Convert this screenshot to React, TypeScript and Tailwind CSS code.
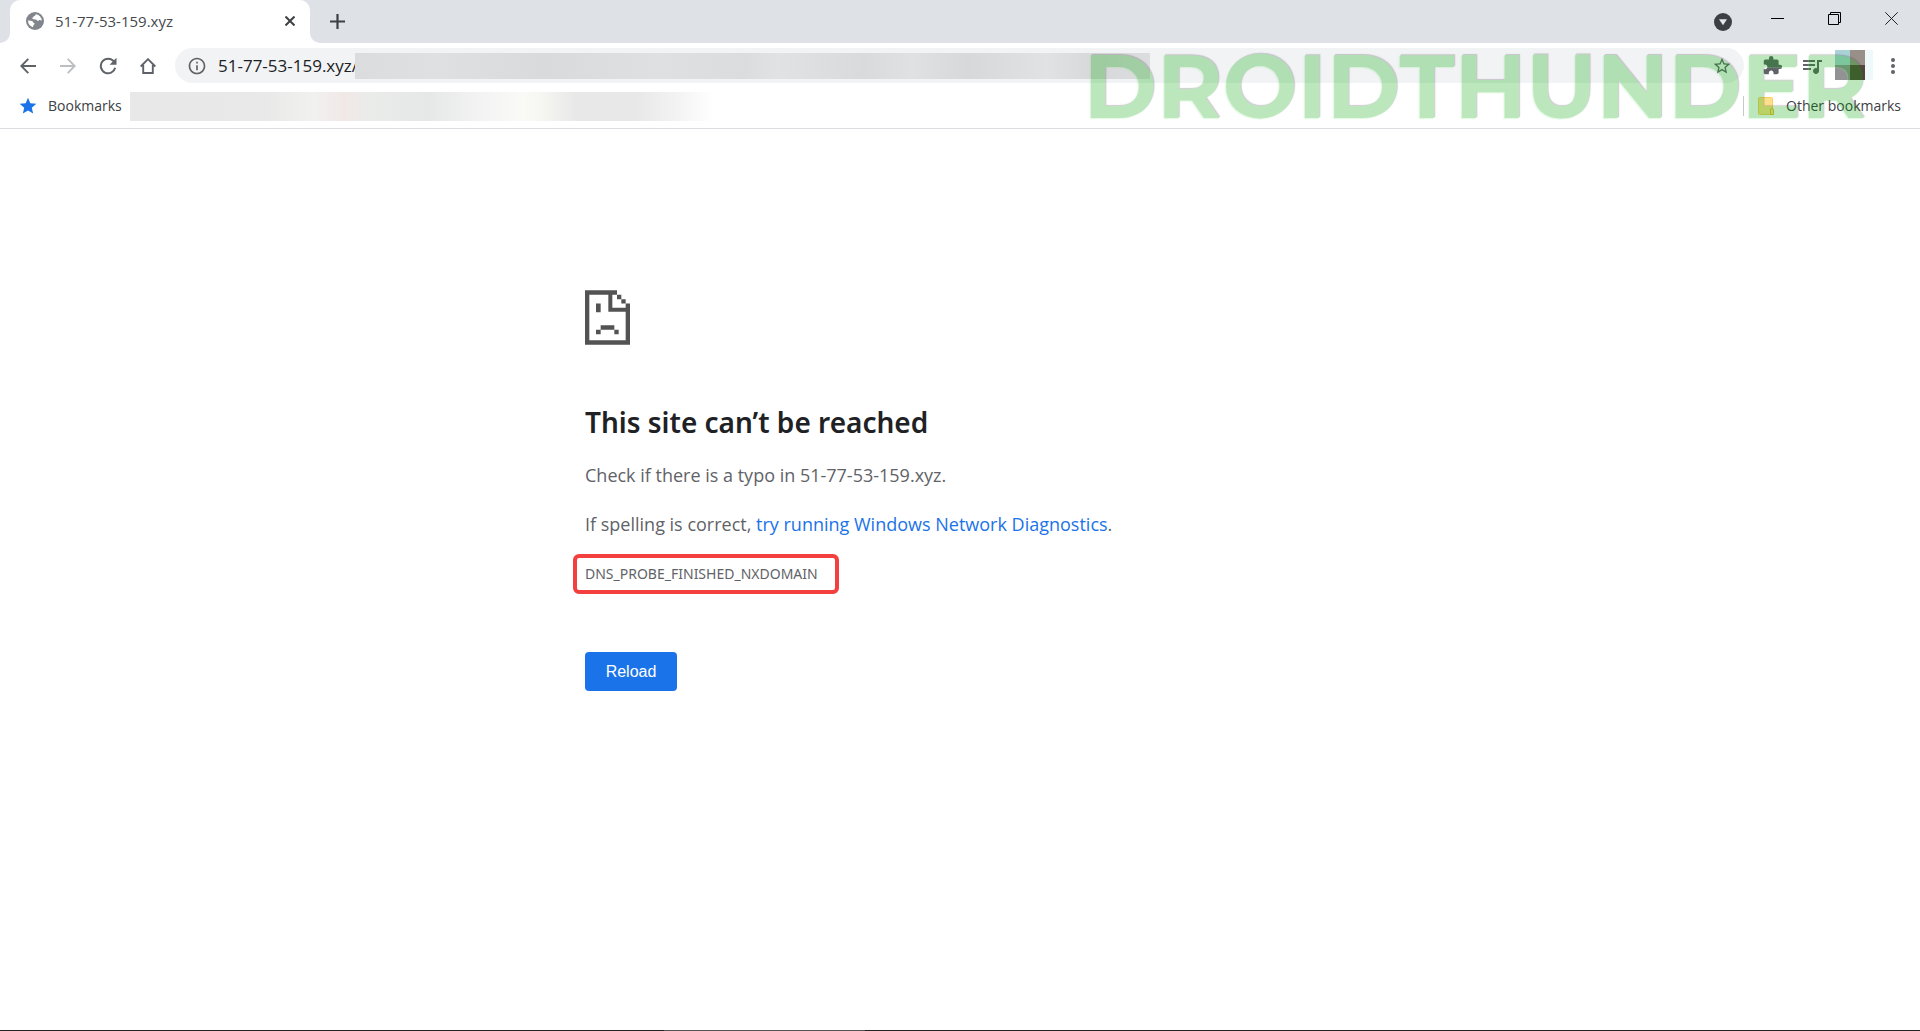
import type { ReactNode } from 'react'
import { MdExtension, MdInfoOutline, MdQueueMusic, MdStar, MdStarOutline } from 'react-icons/md'

function IconButton({ label, className = '', children }: { label: string; className?: string; children: ReactNode }) {
  return (
    <button type="button" aria-label={label} className={`flex shrink-0 items-center justify-center ${className}`}>
      {children}
    </button>
  )
}

function GlobeIcon() {
  return (
    <svg className="h-[18px] w-[18px] shrink-0" viewBox="0 0 18 18">
      <circle cx="9" cy="9" r="9" fill="#80868b" />
      <path
        d="M9.6 2.2c-.3 1-.1 1.6-1.3 1.8-1 .1-.6 1.3-1.6 1.6-.9.3-.3 1.5.5 1.6l2.6.2c1 .1 1 1.3 2 1.4.8 0 1-.9 1.9-.8.8 0 1.5.6 2.2.5A6.9 6.9 0 0 0 9.6 2.2zM2.1 8.3c1.1.5 2.6.3 3.9.8 1.3.5.9 1.7 2 2 1.1.4.8 1.4-.1 1.6-.9.3-.5 1.7-1.1 2.5A6.9 6.9 0 0 1 2.1 8.3z"
        fill="#fff"
      />
    </svg>
  )
}

function SadPageIcon() {
  return (
    <svg className="h-[55px] w-[45px]" viewBox="0 0 135 164" fill="#535353">
      <path d="M0 0H96V14H109V27H122V40H135V164H0zM13 14V150H122V65H70V14zM82 14V53H122V40H109V27H96V14z" fillRule="evenodd" />
      <path d="M33 40h14v26H33zM47 105h41v14H47zM33 119h14v13H33zM88 119h13v13H88z" />
    </svg>
  )
}

function TabStrip() {
  return (
    <div className="flex h-[43px] items-stretch bg-[#dee1e6]">
      {/* rounded foot on each side of the active tab */}
      <div className="w-[10px] bg-white">
        <div className="h-full w-full rounded-br-[10px] bg-[#dee1e6]" />
      </div>
      <div className="flex w-[300px] items-center rounded-t-[10px] bg-white pr-3 pb-[2px] pl-4">
        <GlobeIcon />
        <span className="ml-[11px] flex-1 text-[15px] leading-5 text-[#45494d]">51-77-53-159.xyz</span>
        <IconButton label="Close tab" className="h-4 w-4">
          <svg className="h-[10px] w-[10px]" viewBox="0 0 10 10" stroke="#3c4043" strokeWidth="2">
            <path d="M.5.5l9 9M9.5.5l-9 9" />
          </svg>
        </IconButton>
      </div>
      <div className="w-[10px] bg-white">
        <div className="h-full w-full rounded-bl-[10px] bg-[#dee1e6]" />
      </div>
      <IconButton label="New tab" className="w-[34px] pb-px">
        <svg className="h-[15px] w-[15px]" viewBox="0 0 15 15" stroke="#3c4043" strokeWidth="2.2">
          <path d="M7.5 0v15M0 7.5h15" />
        </svg>
      </IconButton>
      <div className="ml-auto flex">
        <IconButton label="Search tabs" className="w-[44px]">
          <svg className="h-[18px] w-[18px]" viewBox="0 0 18 18">
            <circle cx="9" cy="9" r="9" fill="#3c4043" />
            <path d="M5 6.3h8l-4 6z" fill="#e4e6ea" />
          </svg>
        </IconButton>
        <div className="flex h-[37px] items-center pl-1">
          <IconButton label="Minimize" className="h-full w-[57px]">
            <svg className="h-[13px] w-[13px]" viewBox="0 0 13 13" stroke="#000">
              <path d="M0 6.5h13" />
            </svg>
          </IconButton>
          <IconButton label="Restore" className="h-full w-[57px]">
            <svg className="h-[13px] w-[13px]" viewBox="0 0 13 13" fill="none" stroke="#000">
              <path d="M.5 2.5h10v10H.5zM2.5 2.5v-2h10v10h-2" />
            </svg>
          </IconButton>
          <IconButton label="Close" className="h-full w-[57px]">
            <svg className="h-[13px] w-[13px]" viewBox="0 0 13 13" stroke="#222">
              <path d="M.3.3l12.4 12.4M12.7.3L.3 12.7" />
            </svg>
          </IconButton>
        </div>
      </div>
    </div>
  )
}

function Toolbar() {
  return (
    <div className="flex h-[45px] items-center bg-white pr-2 pl-2">
      <IconButton label="Back" className="w-10">
        <svg className="h-4 w-4" viewBox="0 0 16 16" fill="none" stroke="#5f6368" strokeWidth="1.9">
          <path d="M16 8H1.5M8.3.9L1.3 8l7 7.1" />
        </svg>
      </IconButton>
      <IconButton label="Forward" className="w-10">
        <svg className="h-4 w-4" viewBox="0 0 16 16" fill="none" stroke="#bdbfc1" strokeWidth="1.9">
          <path d="M0 8h14.5M7.7.9l7 7.1-7 7.1" />
        </svg>
      </IconButton>
      <IconButton label="Reload page" className="w-10">
        <svg className="h-[18px] w-[18px]" viewBox="0 0 18 18">
          <path d="M14.8 4.4A7.3 7.3 0 1 0 16.2 10.8" fill="none" stroke="#5f6368" strokeWidth="2" />
          <path d="M17.5.8v6.9h-6.9z" fill="#5f6368" />
        </svg>
      </IconButton>
      <IconButton label="Home" className="w-10">
        <svg className="h-4 w-4" viewBox="0 0 16 16" fill="none" stroke="#5f6368" strokeWidth="1.9">
          <path d="M.7 8.5L8 1.2l7.3 7.3M3.2 7v8h9.6V7" />
        </svg>
      </IconButton>
      <div className="ml-[7px] flex h-[35px] min-w-0 flex-1 items-center rounded-full bg-[#f1f3f4] pr-3 pl-3">
        <MdInfoOutline className="h-5 w-5 shrink-0 text-[#5f6368]" />
        <input
          aria-label="Address"
          defaultValue="51-77-53-159.xyz/"
          className="ml-[11px] h-6 w-[137px] shrink-0 bg-transparent text-[17px] text-[#202124] outline-none"
        />
        <div className="h-[26px] w-[795px] bg-[linear-gradient(90deg,#dbdcde_0%,#dfe0e2_10%,#d9dadc_24%,#dfe0e1_38%,#dbdcdd_49%,#e1e2e4_53%,#d9dadc_64%,#e0e1e3_70%,#d7d8da_77%,#e1e2e4_87%,#d7d8da_93%,#dcdddf_100%)]" />
        <IconButton label="Bookmark this tab" className="ml-auto h-5 w-5">
          <MdStarOutline className="h-5 w-5 text-[#5f6368]" />
        </IconButton>
      </div>
      <IconButton label="Extensions" className="ml-2 w-10">
        <MdExtension className="h-[21px] w-[21px] text-[#5f6368]" />
      </IconButton>
      <IconButton label="Media controls" className="w-10">
        <MdQueueMusic className="h-6 w-6 text-[#5f6368]" />
      </IconButton>
      <button type="button" aria-label="Profile" className="ml-[3px] flex h-8 pb-[2px]">
        <span className="grid h-full w-[30px] grid-cols-2">
          <span className="bg-[#a9d2d6]" />
          <span className="bg-[#988f88]" />
          <span className="bg-[#929295]" />
          <span className="bg-[#55453b]" />
        </span>
        <span className="h-full w-2 bg-[#f0f9fa]" />
      </button>
      <IconButton label="Menu" className="w-[39px]">
        <svg className="h-4 w-1" viewBox="0 0 4 16" fill="#5f6368">
          <circle cx="2" cy="2" r="2" />
          <circle cx="2" cy="8" r="2" />
          <circle cx="2" cy="14" r="2" />
        </svg>
      </IconButton>
    </div>
  )
}

function BookmarksBar() {
  return (
    <div className="flex h-[41px] items-center border-b border-[#dadce0] bg-white pr-[19px] pb-1 pl-[18px] text-[14px] leading-5 text-[#3c4043]">
      <button type="button" className="flex items-center gap-[10px]">
        <MdStar className="h-5 w-5 text-[#1a73e8]" />
        Bookmarks
      </button>
      <div className="ml-2 h-[29px] w-[595px] bg-[linear-gradient(90deg,#e8e8e8_0%,#e9e9e9_23%,#f1f1f0_31%,#f1e8e6_36%,#eaecea_40%,#e6e7e7_50%,#f2f2f3_58%,#fafaf7_66%,#f6f7f2_69%,#e8e8e8_75%,#e8e8e8_85%,#f3f3f3_92%,#ffffff_98%)]" />
      <div className="ml-auto flex items-center">
        <div className="h-5 w-px bg-[#c6c9cd]" />
        <button type="button" className="flex items-center gap-3 pl-[14px]">
          <svg className="h-[18px] w-4" viewBox="0 0 16 18">
            <rect x=".5" y=".5" width="14" height="17" rx="1" fill="#ffe08a" stroke="#f7cf5c" />
            <path d="M12.5 17.5v-4.5a1.5 1.5 0 0 1 3 0v4.5z" fill="#ffe08a" stroke="#e5b93c" />
          </svg>
          Other bookmarks
        </button>
      </div>
    </div>
  )
}

export default function App() {
  return (
    <div className="flex min-h-screen flex-col bg-white font-['Segoe_UI','Open_Sans',sans-serif]">
      <header className="relative">
        <TabStrip />
        <Toolbar />
        <BookmarksBar />
        <div className="pointer-events-none absolute top-[42px] right-[53px] font-['Montserrat','Inter',sans-serif] text-[89px] leading-[88px] font-bold text-[#00a700] opacity-[0.26] [text-shadow:1px_-1px_1px_#503c5a,-1px_1px_1px_#8ceb8c]">
          DROIDTHUNDER
        </div>
      </header>

      <main className="mx-auto w-full max-w-[750px] flex-1 pt-[161px] text-[18px] leading-7 text-[#5f6368]">
        <SadPageIcon />
        <h1 className="mt-[59px] font-['Segoe_UI','Noto_Sans',sans-serif] text-[28px] leading-9 font-semibold text-[#202124]">
          This site can’t be reached
        </h1>
        <p className="mt-[21px]">Check if there is a typo in 51-77-53-159.xyz.</p>
        <p className="mt-[21px]">
          If spelling is correct,{' '}
          <a href="#diagnostics" className="text-[#1a73e8]">
            try running Windows Network Diagnostics
          </a>
          .
        </p>
        <div className="mt-4 -ml-3 flex h-10 w-[266px] items-center rounded-md border-4 border-[#f43f3f] px-2 font-['Segoe_UI','Noto_Sans',sans-serif] text-[14px] leading-5">
          DNS_PROBE_FINISHED_NXDOMAIN
        </div>
        <button
          type="button"
          className="mt-[58px] h-[39px] w-[92px] rounded bg-[#1a73e8] font-['Liberation_Sans',sans-serif] text-[16px] leading-5 text-white"
        >
          Reload
        </button>
      </main>

      <footer className="flex h-px bg-[#222222]">
        <div className="ml-[664px] w-[201px] bg-[#555555]" />
      </footer>
    </div>
  )
}
